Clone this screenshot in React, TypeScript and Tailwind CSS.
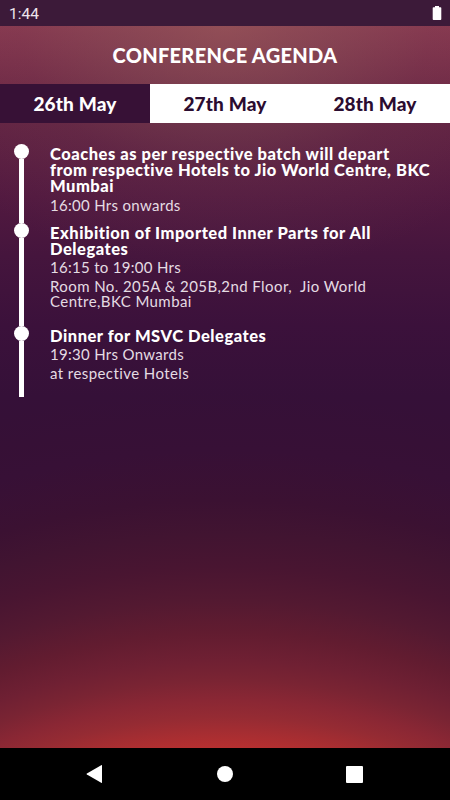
import React, { useState } from 'react';

type AgendaItem = {
  title: string[];
  time: string;
  venue?: string[];
  height: string;
};

const days = ['26th May', '27th May', '28th May'];

const agenda: AgendaItem[] = [
  {
    title: [
      'Coaches as per respective batch will depart',
      'from respective Hotels to Jio World Centre, BKC',
      'Mumbai',
    ],
    time: '16:00 Hrs onwards',
    height: 'h-[79px]',
  },
  {
    title: ['Exhibition of Imported Inner Parts for All', 'Delegates'],
    time: '16:15 to 19:00 Hrs',
    venue: ['Room No. 205A & 205B,2nd Floor,\u00a0 Jio World', 'Centre,BKC Mumbai'],
    height: 'h-[103px]',
  },
  {
    title: ['Dinner for MSVC Delegates'],
    time: '19:30 Hrs Onwards',
    venue: ['at respective Hotels'],
    height: 'h-[71px]',
  },
];

const StatusBar: React.FC = () => (
  <div className="flex h-[26px] shrink-0 items-center justify-between bg-[#3c1a39] pr-2 pl-[9px]">
    <span className="pt-[3px] font-['Roboto',sans-serif] text-[15.5px] leading-none text-[#eee5ec]">1:44</span>
    <svg width="10" height="14" viewBox="0 0 10 14" fill="white">
      <path d="M3 0h4v1.3h1.5q.8 0 .8.8v11q0 .9-.8.9h-7q-.8 0-.8-.9v-11q0-.8.8-.8H3z" />
    </svg>
  </div>
);

const NavBar: React.FC = () => (
  <div className="flex h-[52px] shrink-0 items-center justify-between bg-black pr-[87px] pl-[86px]">
    <svg width="17" height="18" viewBox="0 0 16 18" fill="white">
      <path d="M15.5.2v17.6q-.4.2-.8 0L.4 9.6q-.7-.6 0-1.2L14.7.2q.4-.2.8 0z" />
    </svg>
    <div className="size-4 rounded-full bg-white" />
    <div className="size-[17px] rounded-[1px] bg-white" />
  </div>
);

const AgendaRow: React.FC<{ item: AgendaItem }> = ({ item }) => (
  <li className={`flex ${item.height}`}>
    <div className="flex w-[15px] shrink-0 flex-col items-center">
      <div className="size-[15px] shrink-0 rounded-full bg-white" />
      <div className="w-[5px] flex-1 bg-white" />
    </div>
    <div className="pt-[2.5px] pl-[21.5px] whitespace-nowrap">
      <h2 className="text-[16.5px] leading-[16.2px] font-black tracking-[0.52px]">
        {item.title.map((line) => (
          <span key={line} className="block">{line}</span>
        ))}
      </h2>
      <p className="mt-[3px] text-[15px] leading-[15.5px] tracking-[0.3px] text-[#e5dce3]">{item.time}</p>
      {item.venue && (
        <p className="mt-[3px] text-[15px] leading-[15.5px] tracking-[0.42px] text-[#e5dce3]">
          {item.venue.map((line) => (
            <span key={line} className="block">{line}</span>
          ))}
        </p>
      )}
    </div>
  </li>
);

const App: React.FC = () => {
  const [active, setActive] = useState(0);

  return (
    <div className="flex h-[800px] w-[450px] flex-col overflow-hidden font-['Lato',sans-serif] text-white">
      <StatusBar />
      {/* warm glow at the top and a wide red arc rising from the bottom */}
      <main className="flex flex-1 flex-col bg-[radial-gradient(circle_at_50%_1274px,#b83030_550px,#952b33_583px,#8a2734_600px,#7a2433_620px,#6f2033_640px,#621c30_667px,#531931_700px,#491531_733px,#411431_767px,#3b1132_800px,#371036_850px,rgba(55,16,56,0)_910px),radial-gradient(ellipse_340px_250px_at_50%_0%,rgba(160,108,96,0.45),rgba(145,102,95,0.32)_30%,rgba(130,85,90,0.14)_60%,transparent),linear-gradient(to_bottom,#87364f_0px,#702846_60px,#602142_100px,#521940_170px,#45153d_230px,#3b113b_300px,#351038_370px,#351035_440px)]">
        <h1 className="flex h-[58px] items-center justify-center text-[20px] font-black tracking-[0.3px]">
          CONFERENCE AGENDA
        </h1>
        <div className="grid h-[39px] grid-cols-3">
          {days.map((day, index) => (
            <button
              key={day}
              onClick={() => setActive(index)}
              className={`pt-px text-[19px] font-black tracking-[0.15px] ${
                active === index ? 'bg-[#371136] text-white' : 'bg-white text-[#2b0c30]'
              }`}
            >
              {day}
            </button>
          ))}
        </div>
        <ul className="pt-[20.5px] pl-[13.5px]">
          {agenda.map((item) => (
            <AgendaRow key={item.time} item={item} />
          ))}
        </ul>
      </main>
      <NavBar />
    </div>
  );
};

export default App;
